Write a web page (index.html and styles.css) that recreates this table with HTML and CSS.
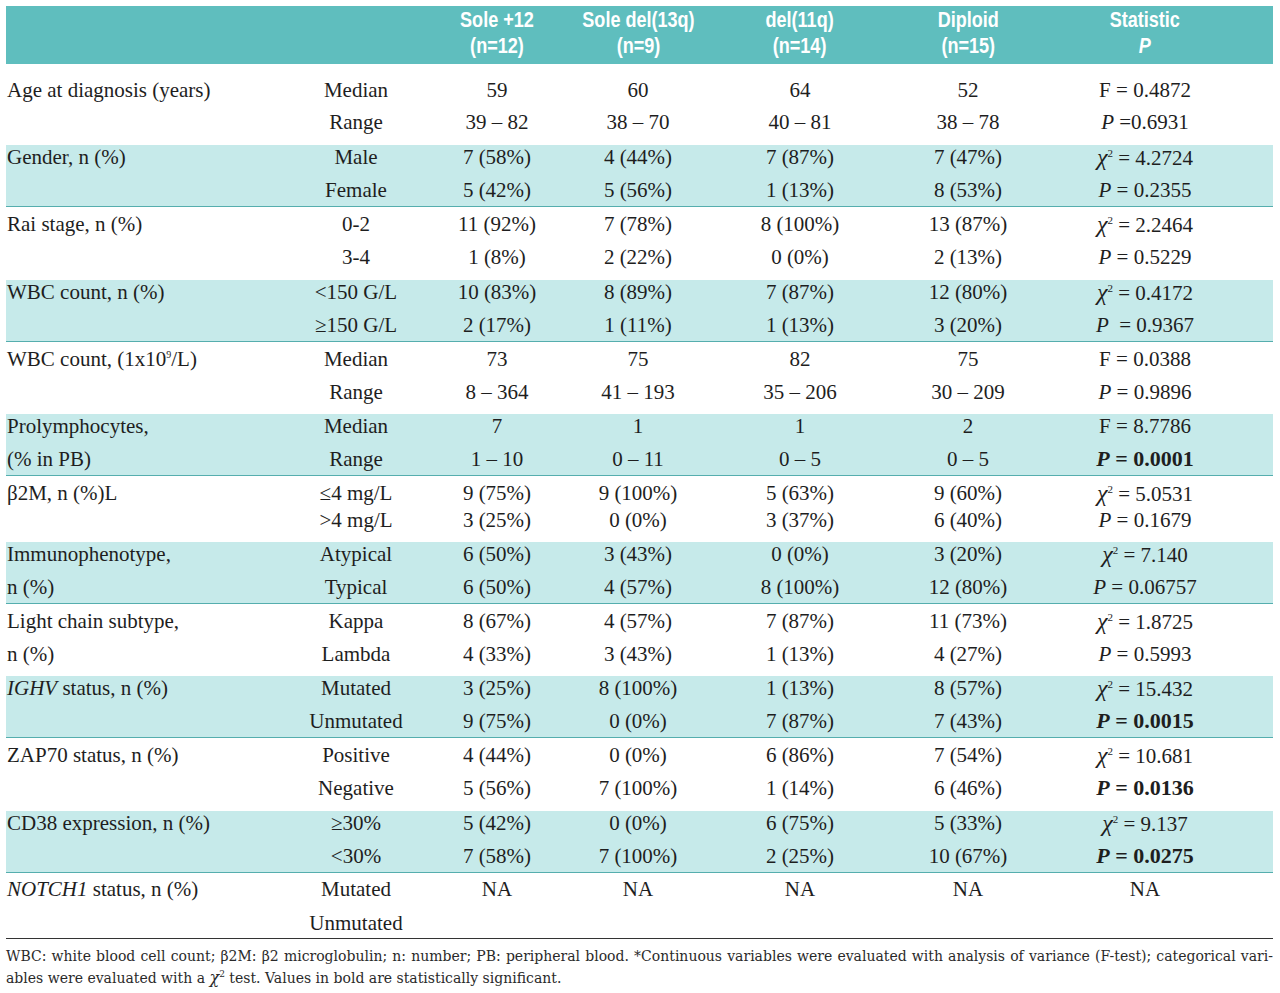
FILE: index.html
```html
<!DOCTYPE html>
<html>
<head>
<meta charset="utf-8">
<link rel="stylesheet" href="styles.css">
</head>
<body>
<div class="tbl">
  <div class="head row">
    <div></div><div></div>
    <div class="c"><span class="hc">Sole +12<br>(n=12)</span></div>
    <div class="c"><span class="hc">Sole del(13q)<br>(n=9)</span></div>
    <div class="c"><span class="hc">del(11q)<br>(n=14)</span></div>
    <div class="c"><span class="hc">Diploid<br>(n=15)</span></div>
    <div class="c"><span class="hc">Statistic<br><i>P</i></span></div>
  </div>

  <div class="grp first">
    <div class="row"><div class="lab">Age at diagnosis (years)</div><div class="c">Median</div><div class="c">59</div><div class="c">60</div><div class="c">64</div><div class="c">52</div><div class="c">F = 0.4872</div></div>
    <div class="row"><div class="lab"></div><div class="c">Range</div><div class="c">39 – 82</div><div class="c">38 – 70</div><div class="c">40 – 81</div><div class="c">38 – 78</div><div class="c"><i>P</i> =0.6931</div></div>
  </div>

  <div class="grp band">
    <div class="row"><div class="lab">Gender, n (%)</div><div class="c">Male</div><div class="c">7 (58%)</div><div class="c">4 (44%)</div><div class="c">7 (87%)</div><div class="c">7 (47%)</div><div class="c"><i class="chi">χ</i><sup>2</sup> = 4.2724</div></div>
    <div class="row"><div class="lab"></div><div class="c">Female</div><div class="c">5 (42%)</div><div class="c">5 (56%)</div><div class="c">1 (13%)</div><div class="c">8 (53%)</div><div class="c"><i>P</i> = 0.2355</div></div>
  </div>

  <div class="grp white plus1">
    <div class="row"><div class="lab">Rai stage, n (%)</div><div class="c">0-2</div><div class="c">11 (92%)</div><div class="c">7 (78%)</div><div class="c">8 (100%)</div><div class="c">13 (87%)</div><div class="c"><i class="chi">χ</i><sup>2</sup> = 2.2464</div></div>
    <div class="row"><div class="lab"></div><div class="c">3-4</div><div class="c">1 (8%)</div><div class="c">2 (22%)</div><div class="c">0 (0%)</div><div class="c">2 (13%)</div><div class="c"><i>P</i> = 0.5229</div></div>
  </div>

  <div class="grp band">
    <div class="row"><div class="lab">WBC count, n (%)</div><div class="c">&lt;150 G/L</div><div class="c">10 (83%)</div><div class="c">8 (89%)</div><div class="c">7 (87%)</div><div class="c">12 (80%)</div><div class="c"><i class="chi">χ</i><sup>2</sup> = 0.4172</div></div>
    <div class="row"><div class="lab"></div><div class="c">≥150 G/L</div><div class="c">2 (17%)</div><div class="c">1 (11%)</div><div class="c">1 (13%)</div><div class="c">3 (20%)</div><div class="c"><i>P</i>&nbsp; = 0.9367</div></div>
  </div>

  <div class="grp white">
    <div class="row"><div class="lab">WBC count, (1x10<sup class="sm">9</sup>/L)</div><div class="c">Median</div><div class="c">73</div><div class="c">75</div><div class="c">82</div><div class="c">75</div><div class="c">F = 0.0388</div></div>
    <div class="row"><div class="lab"></div><div class="c">Range</div><div class="c">8 – 364</div><div class="c">41 – 193</div><div class="c">35 – 206</div><div class="c">30 – 209</div><div class="c"><i>P</i> = 0.9896</div></div>
  </div>

  <div class="grp band">
    <div class="row"><div class="lab">Prolymphocytes,</div><div class="c">Median</div><div class="c">7</div><div class="c">1</div><div class="c">1</div><div class="c">2</div><div class="c">F = 8.7786</div></div>
    <div class="row"><div class="lab">(% in PB)</div><div class="c">Range</div><div class="c">1 – 10</div><div class="c">0 – 11</div><div class="c">0 – 5</div><div class="c">0 – 5</div><div class="c"><b><i>P</i> = 0.0001</b></div></div>
  </div>

  <div class="grp white tight">
    <div class="row"><div class="lab">β2M, n (%)L</div><div class="c">≤4 mg/L</div><div class="c">9 (75%)</div><div class="c">9 (100%)</div><div class="c">5 (63%)</div><div class="c">9 (60%)</div><div class="c"><i class="chi">χ</i><sup>2</sup> = 5.0531</div></div>
    <div class="row"><div class="lab"></div><div class="c">&gt;4 mg/L</div><div class="c">3 (25%)</div><div class="c">0 (0%)</div><div class="c">3 (37%)</div><div class="c">6 (40%)</div><div class="c"><i>P</i> = 0.1679</div></div>
  </div>

  <div class="grp band">
    <div class="row"><div class="lab">Immunophenotype,</div><div class="c">Atypical</div><div class="c">6 (50%)</div><div class="c">3 (43%)</div><div class="c">0 (0%)</div><div class="c">3 (20%)</div><div class="c"><i class="chi">χ</i><sup>2</sup> = 7.140</div></div>
    <div class="row"><div class="lab">n (%)</div><div class="c">Typical</div><div class="c">6 (50%)</div><div class="c">4 (57%)</div><div class="c">8 (100%)</div><div class="c">12 (80%)</div><div class="c"><i>P</i> = 0.06757</div></div>
  </div>

  <div class="grp white">
    <div class="row"><div class="lab">Light chain subtype,</div><div class="c">Kappa</div><div class="c">8 (67%)</div><div class="c">4 (57%)</div><div class="c">7 (87%)</div><div class="c">11 (73%)</div><div class="c"><i class="chi">χ</i><sup>2</sup> = 1.8725</div></div>
    <div class="row"><div class="lab">n (%)</div><div class="c">Lambda</div><div class="c">4 (33%)</div><div class="c">3 (43%)</div><div class="c">1 (13%)</div><div class="c">4 (27%)</div><div class="c"><i>P</i> = 0.5993</div></div>
  </div>

  <div class="grp band">
    <div class="row"><div class="lab"><i>IGHV</i> status, n (%)</div><div class="c">Mutated</div><div class="c">3 (25%)</div><div class="c">8 (100%)</div><div class="c">1 (13%)</div><div class="c">8 (57%)</div><div class="c"><i class="chi">χ</i><sup>2</sup> = 15.432</div></div>
    <div class="row"><div class="lab"></div><div class="c">Unmutated</div><div class="c">9 (75%)</div><div class="c">0 (0%)</div><div class="c">7 (87%)</div><div class="c">7 (43%)</div><div class="c"><b><i>P</i> = 0.0015</b></div></div>
  </div>

  <div class="grp white plus1">
    <div class="row"><div class="lab">ZAP70 status, n (%)</div><div class="c">Positive</div><div class="c">4 (44%)</div><div class="c">0 (0%)</div><div class="c">6 (86%)</div><div class="c">7 (54%)</div><div class="c"><i class="chi">χ</i><sup>2</sup> = 10.681</div></div>
    <div class="row"><div class="lab"></div><div class="c">Negative</div><div class="c">5 (56%)</div><div class="c">7 (100%)</div><div class="c">1 (14%)</div><div class="c">6 (46%)</div><div class="c"><b><i>P</i> = 0.0136</b></div></div>
  </div>

  <div class="grp band">
    <div class="row"><div class="lab">CD38 expression, n (%)</div><div class="c">≥30%</div><div class="c">5 (42%)</div><div class="c">0 (0%)</div><div class="c">6 (75%)</div><div class="c">5 (33%)</div><div class="c"><i class="chi">χ</i><sup>2</sup> = 9.137</div></div>
    <div class="row"><div class="lab"></div><div class="c">&lt;30%</div><div class="c">7 (58%)</div><div class="c">7 (100%)</div><div class="c">2 (25%)</div><div class="c">10 (67%)</div><div class="c"><b><i>P</i> = 0.0275</b></div></div>
  </div>

  <div class="grp last">
    <div class="row"><div class="lab"><i>NOTCH1</i> status, n (%)</div><div class="c">Mutated</div><div class="c">NA</div><div class="c">NA</div><div class="c">NA</div><div class="c">NA</div><div class="c">NA</div></div>
    <div class="row"><div class="lab"></div><div class="c">Unmutated</div><div class="c"></div><div class="c"></div><div class="c"></div><div class="c"></div><div class="c"></div></div>
  </div>

  <div class="foot">
    <span class="l1">WBC: white blood cell count; β2M: β2 microglobulin; n: number; PB: peripheral blood. *Continuous variables were evaluated with analysis of variance (F-test); categorical vari-</span>
    <span class="l2">ables were evaluated with a <i class="chi">χ</i><sup>2</sup> test. Values in bold are statistically significant.</span>
  </div>
</div>
</body>
</html>
```

FILE: styles.css
```css
html, body {
  margin: 0;
  padding: 0;
  background: #ffffff;
}

body {
  padding: 6px 7px 0 6px;
  font-family: "Liberation Serif", "Times New Roman", serif;
  font-size: 21px;
  color: #1e1e1e;
}

.tbl {
  width: 1267px;
}

.row {
  display: grid;
  grid-template-columns: 294px 112px 170px 112px 212px 124px 230px;
  height: 24px;
  line-height: 24px;
  white-space: nowrap;
}

.lab {
  padding-left: 1px;
}

.c {
  text-align: center;
}

.head {
  height: 58px;
  background: #5fbebe;
  color: #ffffff;
  font-family: "Liberation Sans", Arial, sans-serif;
  font-weight: bold;
  font-size: 22px;
  line-height: 26px;
  padding-top: 1px;
  box-sizing: border-box;
}

.head .c {
  display: flex;
  justify-content: center;
}

.head .hc {
  display: block;
  flex: none;
  text-align: center;
  transform: scaleX(0.82);
  transform-origin: center top;
}

.head i {
  font-style: italic;
}

.grp {
  display: flex;
  flex-direction: column;
}

.grp.first {
  padding: 14px 0 11px;
  gap: 8px;
}

.grp.band {
  background: #c6eaea;
  border-bottom: 1px solid #55aeae;
  padding: 0 0 4px;
  gap: 9px;
}

.grp.white {
  padding: 5px 0 10px;
  gap: 9px;
}

.grp.white.plus1 {
  padding-bottom: 11px;
}

.grp.white.tight {
  gap: 3px;
}

.grp.last {
  padding: 4px 0 3px;
  gap: 10px;
  border-bottom: 1px solid #333333;
}

sup {
  font-size: 11px;
  line-height: 0;
  vertical-align: 8px;
}

sup.sm {
  font-size: 10px;
}

.chi {
  font-size: 24px;
}

b {
  font-weight: bold;
  font-size: 22px;
}

.foot {
  padding-top: 7px;
  font-family: "DejaVu Serif", serif;
  font-size: 14px;
  line-height: 21px;
  color: #2a2a2a;
}

.foot .l1 {
  display: block;
  text-align: justify;
  text-align-last: justify;
  white-space: nowrap;
}

.foot .l2 {
  display: block;
}

.foot .chi {
  font-size: 16px;
}

.foot sup {
  font-size: 9px;
  vertical-align: 6px;
}
```
